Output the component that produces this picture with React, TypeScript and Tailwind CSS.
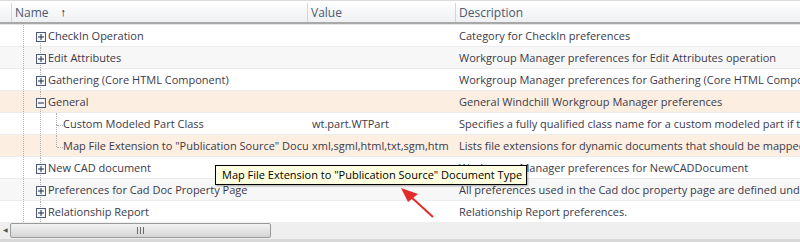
import { ReactNode } from "react"

type Row = {
  name: string
  value?: string
  desc: string
  kind: "plus" | "minus" | "leaf"
  bg: "white" | "gray" | "peach"
}

const rows: Row[] = [
  { name: "CheckIn Operation", desc: "Category for CheckIn preferences", kind: "plus", bg: "white" },
  { name: "Edit Attributes", desc: "Workgroup Manager preferences for Edit Attributes operation", kind: "plus", bg: "gray" },
  { name: "Gathering (Core HTML Component)", desc: "Workgroup Manager preferences for Gathering (Core HTML Component)", kind: "plus", bg: "white" },
  { name: "General", desc: "General Windchill Workgroup Manager preferences", kind: "minus", bg: "peach" },
  { name: "Custom Modeled Part Class", value: "wt.part.WTPart", desc: "Specifies a fully qualified class name for a custom modeled part if the default is not used", kind: "leaf", bg: "white" },
  { name: "Map File Extension to \"Publication Source\" Document Type", value: "xml,sgml,html,txt,sgm,htm", desc: "Lists file extensions for dynamic documents that should be mapped to Publication Source", kind: "leaf", bg: "peach" },
  { name: "New CAD document", desc: "Workgroup Manager preferences for NewCADDocument", kind: "plus", bg: "white" },
  { name: "Preferences for Cad Doc Property Page", desc: "All preferences used in the Cad doc property page are defined under this", kind: "plus", bg: "gray" },
  { name: "Relationship Report", desc: "Relationship Report preferences.", kind: "plus", bg: "white" },
]

const bgClass = {
  white: "bg-white",
  gray: "bg-[#f7f7f7]",
  peach: "bg-[#fcefe1]",
}

function Box({ minus }: { minus?: boolean }) {
  return (
    <svg width="10" height="10" viewBox="0 0 10 10" className="shrink-0">
      <rect x="0.5" y="0.5" width="9" height="9" fill="#f4f6fa" stroke="#4a5a78" />
      <line x1="2" y1="5" x2="8" y2="5" stroke="#1e2a44" />
      {!minus && <line x1="5" y1="2" x2="5" y2="8" stroke="#1e2a44" />}
    </svg>
  )
}

function Dotted({ className }: { className: string }) {
  return <div className={"absolute border-l border-dotted border-[#b0b0b0] " + className} />
}

function HeaderCell({ w, children }: { w: string; children?: ReactNode }) {
  return (
    <div className={"h-full flex items-center border-r border-[#d5d5d5] px-[3px] " + w}>{children}</div>
  )
}

export default function App() {
  return (
    <div
      className="relative w-[800px] h-[242px] overflow-hidden bg-white text-[11px] text-[#3b3a4a]"
      style={{ fontFamily: "'Open Sans', 'Noto Sans', sans-serif" }}
    >
      {/* header */}
      <div className="h-[24px] pt-[2px] flex border-t border-[#dcdcdc] border-b-2 border-b-[#a8a8a8] bg-gradient-to-b from-white to-[#eef0f2] text-[#4a5a70] text-[12px]">
        <HeaderCell w="w-[12px]" />
        <HeaderCell w="w-[296px]">
          <span>Name</span>
          <span className="ml-[12px] text-black text-[11px]">↑</span>
        </HeaderCell>
        <HeaderCell w="w-[148px]">Value</HeaderCell>
        <div className="flex-1 h-full flex items-center px-[3px]">Description</div>
      </div>
      <div className="h-px bg-[#e4e4e4]" />

      {/* rows */}
      <div className="relative">
        {rows.map((r, i) => (
          <div key={i} className={"relative h-[22px] pt-[2px] flex items-center border-b border-[#ececec] " + bgClass[r.bg]}>
            <Dotted className="left-[23px] top-0 bottom-0" />
            {r.kind !== "leaf" ? (
              <>
                {i > 0 && <Dotted className="left-[40px] top-0 h-[6px]" />}
                <Dotted className="left-[40px] bottom-0 h-[6px]" />
              </>
            ) : (
              <>
                <Dotted className="left-[40px] top-0 bottom-0" />
                <Dotted className="left-[56px] top-0 h-[12px]" />
                {i === 4 && <Dotted className="left-[56px] top-[12px] bottom-0" />}
                <div className="absolute left-[57px] top-[12px] w-[6px] border-t border-dotted border-[#b0b0b0]" />
              </>
            )}
            <div className="w-[308px] shrink-0 flex items-center overflow-hidden whitespace-nowrap">
              {r.kind === "leaf" ? (
                <span className="ml-[63px]">{r.name}</span>
              ) : (
                <>
                  <div className="ml-[36px] mr-[2px] relative z-10 flex">
                    <Box minus={r.kind === "minus"} />
                  </div>
                  <span>{r.name}</span>
                </>
              )}
            </div>
            <div className="w-[148px] shrink-0 overflow-hidden whitespace-nowrap pl-[4px]">{r.value}</div>
            <div className="flex-1 overflow-hidden whitespace-nowrap pl-[3px]">{r.desc}</div>
          </div>
        ))}
      </div>

      {/* horizontal scrollbar */}
      <div className="absolute left-0 right-0 bottom-0 h-[20px] bg-[#efefef] border-b-[3px] border-[#d8d8d8] flex items-center">
        <div className="w-[10px] h-full flex items-center justify-center text-[6px] text-[#555]">◀</div>
        <div className="w-[261px] h-[15px] rounded-[2px] border border-[#9a9a9a] bg-gradient-to-b from-[#f4f4f4] to-[#d4d4d4] flex items-center justify-center">
          <div className="flex gap-[2px]">
            <div className="w-px h-[7px] bg-[#6a6a6a]" />
            <div className="w-px h-[7px] bg-[#6a6a6a]" />
            <div className="w-px h-[7px] bg-[#6a6a6a]" />
          </div>
        </div>
      </div>

      {/* tooltip */}
      <div className="absolute left-[215px] top-[165px] w-[312px] h-[20px] px-[6px] flex items-center bg-[#ffffe1] border border-black text-black whitespace-nowrap shadow-[1px_1px_2px_rgba(0,0,0,0.35)]">
        Map File Extension to "Publication Source" Document Type
      </div>

      {/* annotation arrow */}
      <svg className="absolute left-0 top-0" width="800" height="242">
        <line x1="433" y1="217" x2="410" y2="196" stroke="#e32b2b" strokeWidth="2" />
        <polygon points="401,188 418,194 408,202" fill="#e32b2b" />
      </svg>
    </div>
  )
}
